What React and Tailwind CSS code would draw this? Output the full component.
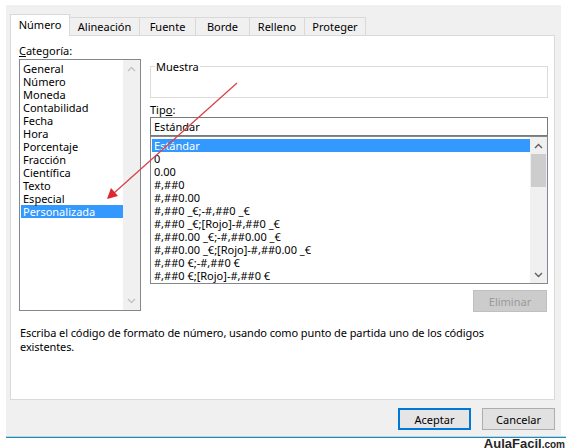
import React from "react";

const categorias = [
  "General",
  "Número",
  "Moneda",
  "Contabilidad",
  "Fecha",
  "Hora",
  "Porcentaje",
  "Fracción",
  "Científica",
  "Texto",
  "Especial",
  "Personalizada",
];

const tipos = [
  "Estándar",
  "0",
  "0.00",
  "#,##0",
  "#,##0.00",
  "#,##0 _€;-#,##0 _€",
  "#,##0 _€;[Rojo]-#,##0 _€",
  "#,##0.00 _€;-#,##0.00 _€",
  "#,##0.00 _€;[Rojo]-#,##0.00 _€",
  "#,##0 €;-#,##0 €",
  "#,##0 €;[Rojo]-#,##0 €",
];

const tabs = [
  { label: "Número", w: "w-[60px]" },
  { label: "Alineación", w: "w-[70px]" },
  { label: "Fuente", w: "w-[56px]" },
  { label: "Borde", w: "w-[54px]" },
  { label: "Relleno", w: "w-[55px]" },
  { label: "Proteger", w: "w-[61px]" },
];

const Chevron = ({ up, color }) => (
  <svg width="9" height="6" viewBox="0 0 9 6">
    <path
      d={up ? "M1 5 L4.5 1.5 L8 5" : "M1 1 L4.5 4.5 L8 1"}
      fill="none"
      stroke={color}
      strokeWidth="1.4"
    />
  </svg>
);

const App = () => {
  return (
    <div className="relative w-[566px] h-[448px] overflow-hidden bg-white text-[11px] leading-[13px] text-black font-['Noto_Sans',sans-serif]">
      <div className="ml-[6px] mt-[5px] w-[555px] h-[431px] bg-[#f0f0f0] pl-[4px] pr-[6px] flex flex-col">
        {/* tabs */}
        <div className="h-[30px] flex items-end">
          {tabs.map((t, i) =>
            i === 0 ? (
              <div
                key={t.label}
                className={`${t.w} h-[22px] -mb-px relative z-10 bg-white border border-b-0 border-[#d9d9d9] flex items-center justify-center pb-[2px]`}
              >
                {t.label}
              </div>
            ) : (
              <div
                key={t.label}
                className={`${t.w} h-[18px] border border-l-0 border-b-0 border-[#d9d9d9] flex items-center justify-center pb-[1px]`}
              >
                {t.label}
              </div>
            )
          )}
        </div>

        {/* panel */}
        <div className="w-[545px] h-[365px] bg-white border border-[#d9d9d9] pt-[7px] pl-[8px]">
          <div className="flex items-start gap-[9px]">
            {/* left column */}
            <div className="w-[122px]">
              <div className="h-[16px] leading-[16px]">
                <span className="underline">C</span>ategoría:
              </div>
              <div className="h-[252px] border border-[#828790] flex">
                <div className="flex-1 pt-[2px] pl-[1px]">
                  {categorias.map((c) => (
                    <div
                      key={c}
                      className={`h-[13px] leading-[13px] pl-[2px] whitespace-nowrap ${
                        c === "Personalizada" ? "bg-[#3399ff] text-white" : ""
                      }`}
                    >
                      {c}
                    </div>
                  ))}
                </div>
                <div className="w-[17px] bg-[#f0f0f0] flex flex-col items-center justify-between py-[6px]">
                  <Chevron up color="#c2c2c2" />
                  <Chevron color="#c2c2c2" />
                </div>
              </div>
            </div>

            {/* right column */}
            <div className="w-[398px] pt-[17px]">
              <fieldset className="h-[38px] border border-[#dcdcdc]">
                <legend className="ml-[4px] px-[1px] leading-[13px]">Muestra</legend>
              </fieldset>
              <div className="mt-[4px] h-[15px] leading-[15px]">
                Tip<span className="underline">o</span>:
              </div>
              <div className="h-[19px] border border-[#7a7a7a] pl-[3px] leading-[17px]">
                Estándar
              </div>
              <div className="h-[148px] border border-[#828790] flex">
                <div className="flex-1 pt-[2px] pl-[1px]">
                  {tipos.map((t, i) => (
                    <div
                      key={t}
                      className={`h-[13px] leading-[13px] pl-[2px] whitespace-nowrap ${
                        i === 0 ? "bg-[#3399ff] text-white" : ""
                      }`}
                    >
                      {t}
                    </div>
                  ))}
                </div>
                <div className="w-[17px] bg-[#f0f0f0] flex flex-col items-center">
                  <div className="h-[17px] flex items-center justify-center">
                    <Chevron up color="#606060" />
                  </div>
                  <div className="w-[15px] h-[33px] bg-[#cdcdcd]" />
                  <div className="flex-1" />
                  <div className="h-[17px] flex items-center justify-center">
                    <Chevron color="#606060" />
                  </div>
                </div>
              </div>
              <div className="flex justify-end mt-[6px] pr-[1px]">
                <div className="w-[74px] h-[22px] bg-[#cccccc] border border-[#bfbfbf] text-[#9a9a9a] flex items-center justify-center">
                  Eliminar
                </div>
              </div>
            </div>
          </div>

          <p className="mt-[14px] pl-[1px] leading-[14px] w-[500px] tracking-[-0.1px]">
            Escriba el código de formato de número, usando como punto de partida uno de los códigos existentes.
          </p>
        </div>

        {/* buttons */}
        <div className="flex justify-end gap-[11px] mt-[8px]">
          <div className="w-[73px] h-[22px] bg-[#e5e5e5] border-2 border-[#0078d7] flex items-center justify-center">
            Aceptar
          </div>
          <div className="w-[73px] h-[22px] bg-[#e1e1e1] border border-[#adadad] flex items-center justify-center">
            Cancelar
          </div>
        </div>
      </div>

      <div className="ml-[6px] h-px bg-[#a8dced]" />
      <div className="ml-[6px] h-px bg-[#2e86a8]" />
      <div className="flex justify-end items-baseline pr-[1px] leading-[11px] text-[#262626] font-bold font-['Liberation_Sans',sans-serif]">
        <span className="text-[13px]">AulaFacil</span>
        <span className="text-[10px]">.com</span>
      </div>

      {/* red arrow annotation */}
      <svg className="absolute inset-0 pointer-events-none" width="566" height="448">
        <line x1="237" y1="83" x2="114" y2="193" stroke="#d9434b" strokeWidth="1.3" />
        <polygon points="107,199 111,188 118,196" fill="#e0262e" />
      </svg>
    </div>
  );
};

export default App;
